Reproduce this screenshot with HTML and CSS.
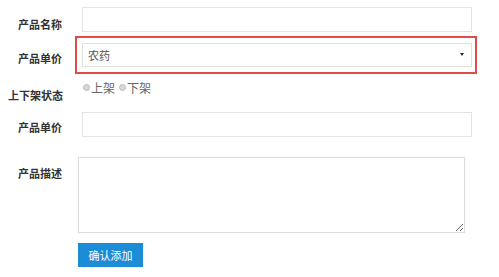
FILE: index.html
```html
<!DOCTYPE html>
<html lang="zh-CN">
<head>
	<meta charset="UTF-8">
	<title>添加产品</title>
	<link rel="stylesheet" href="styles.css">
</head>
<body>
    <form class="form">
        <div class="row row1">
            <label class="lab">产品名称</label>
            <input class="txt" type="text">
        </div>
        <div class="row row2">
            <label class="lab">产品单价</label>
            <div class="mark">
                <div class="sel-wrap">
                    <select class="sel">
                        <option>农药</option>
                    </select>
                </div>
            </div>
        </div>
        <div class="row row3">
            <label class="lab">上下架状态</label>
            <div class="radios">
                <input class="rad" type="radio" name="state"><span>上架</span>
                <input class="rad" type="radio" name="state"><span>下架</span>
            </div>
        </div>
        <div class="row row4">
            <label class="lab">产品单价</label>
            <input class="txt" type="text">
        </div>
        <div class="row row5">
            <label class="lab">产品描述</label>
            <textarea class="area"></textarea>
        </div>
        <div class="row row6">
            <button class="btn" type="button">确认添加</button>
        </div>
    </form>
</body>
</html>
```

FILE: styles.css
```css
*{
    margin: 0;
    padding: 0;
    box-sizing: border-box;
}
body{
    background: #fff;
    font-family: "Noto Sans CJK SC", "Noto Sans", sans-serif;
    font-size: 11px;
    color: #333;
}
.form{padding: 7px 0 0 8px;}
.row{display: flex;align-items: flex-start;}
.lab{
    width: 54px;
    flex: none;
    margin-right: 20px;
    text-align: right;
    font-weight: bold;
    line-height: 14px;
    color: #333;
    white-space: nowrap;
}
.row1 .lab{padding-top: 10px;}
.row2{margin-top: 4px;}
.row2 .lab{padding-top: 15px;margin-right: 13px;}
.row3{margin-top: 6px;}
.row3 .lab{padding-top: 8px;}
.row4{margin-top: 10px;}
.row4 .lab{padding-top: 8px;}
.row5{margin-top: 20px;}
.row5 .lab{padding-top: 9px;margin-right: 16px;}
.row6{margin-top: 10px;padding-left: 70px;}

.txt{
    width: 390px;
    height: 25px;
    border: 1px solid #e3e3e3;
    outline: none;
    font: inherit;
}
.mark{
    width: 402px;
    height: 38px;
    border: 2px solid #e04a4a;
    padding: 5px 3px 5px 5px;
}
.sel-wrap{position: relative;width: 390px;height: 24px;}
.sel-wrap::after{
    content: "";
    position: absolute;
    right: 8px;
    top: 10px;
    border-top: 3px solid #222;
    border-left: 2px solid transparent;
    border-right: 2px solid transparent;
}
.sel{
    -webkit-appearance: none;
    appearance: none;
    width: 100%;
    height: 24px;
    border: 1px solid #dfe4da;
    border-radius: 0;
    background: #fff;
    padding-left: 5px;
    font: inherit;
    font-size: 11px;
    color: #555;
    outline: none;
}
.radios{
    display: flex;
    align-items: center;
    height: 14px;
    font-size: 12px;
    color: #666;
}
.rad{
    -webkit-appearance: none;
    appearance: none;
    width: 7px;
    height: 7px;
    border-radius: 50%;
    background: #d6d6d6;
    border: 1px solid #bdbdbd;
    margin: 0 1px 0 1px;
}
.radios span{margin-right: 3px;}
.area{
    width: 387px;
    height: 76px;
    border: 1px solid #dedede;
    box-shadow: 0 0 2px #f0f0f0;
    outline: none;
    font: inherit;
}
.btn{
    width: 65px;
    height: 24px;
    border: none;
    background: #1c8cd6;
    color: #fff;
    font-family: inherit;
    font-size: 11px;
    cursor: pointer;
}
```
